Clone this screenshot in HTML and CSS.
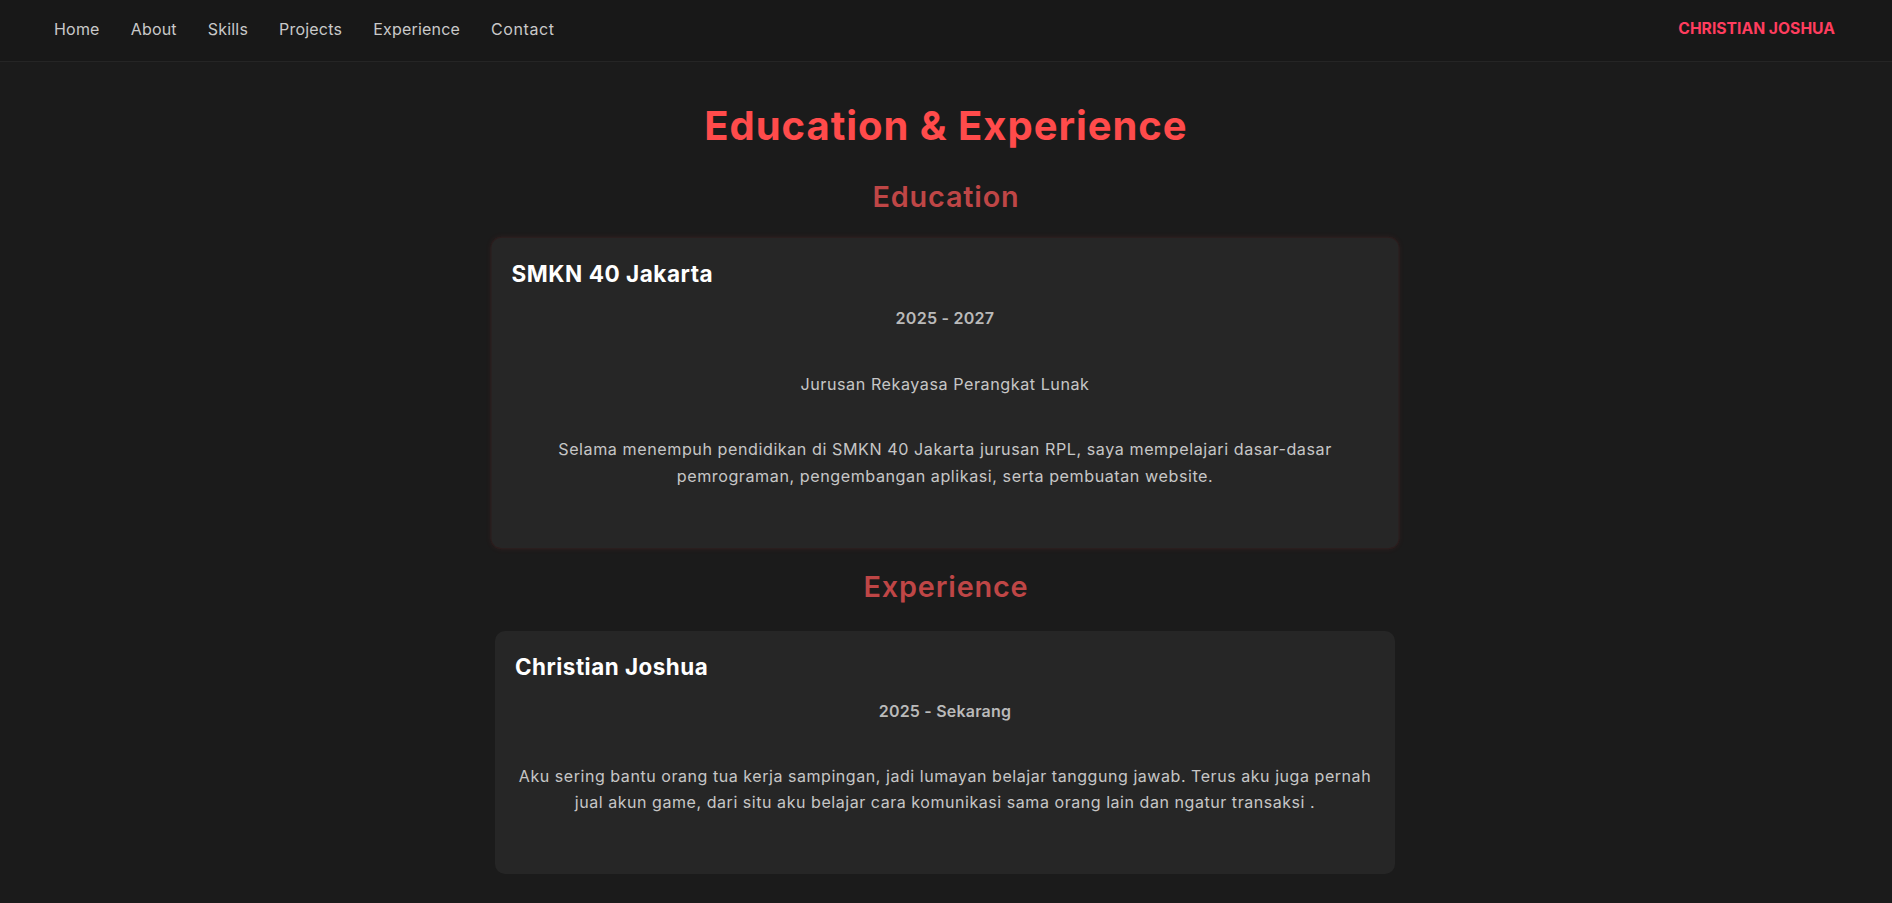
FILE: index.html
```html
<!DOCTYPE html>
<html lang="id">
<head>
<meta charset="utf-8">
<title>Christian Joshua - Experience</title>
<link rel="stylesheet" href="styles.css">
</head>
<body>
<header class="topbar">
  <nav class="nav">
    <a class="nav-link" href="#home">Home</a>
    <a class="nav-link" href="#about">About</a>
    <a class="nav-link" href="#skills">Skills</a>
    <a class="nav-link" href="#projects">Projects</a>
    <a class="nav-link" href="#experience">Experience</a>
    <a class="nav-link nav-link-last" href="#contact">Contact</a>
  </nav>
  <div class="brand">CHRISTIAN JOSHUA</div>
</header>

<main class="section" id="experience">
  <h1 class="section-title">Education &amp; Experience</h1>

  <h3 class="group-title">Education</h3>
  <div class="card card-active">
    <h4 class="card-title">SMKN 40 Jakarta</h4>
    <p class="card-date">2025 - 2027</p>
    <p class="card-text">Jurusan Rekayasa Perangkat Lunak</p>
    <p class="card-text">Selama menempuh pendidikan di SMKN 40 Jakarta jurusan RPL, saya mempelajari dasar-dasar pemrograman, pengembangan aplikasi, serta pembuatan website.</p>
  </div>

  <h3 class="group-title">Experience</h3>
  <div class="card">
    <h4 class="card-title">Christian Joshua</h4>
    <p class="card-date">2025 - Sekarang</p>
    <p class="card-text">Aku sering bantu orang tua kerja sampingan, jadi lumayan belajar tanggung jawab. Terus aku juga pernah jual akun game, dari situ aku belajar cara komunikasi sama orang lain dan ngatur transaksi .</p>
  </div>
</main>
</body>
</html>
```
FILE: styles.css
```css
* { box-sizing: border-box; }

html, body {
  margin: 0;
  padding: 0;
}

body {
  background: #1b1b1b;
  color: #c4c4c4;
  font-family: "Inter", "Noto Sans", sans-serif;
  font-size: 16px;
}

.topbar {
  display: flex;
  justify-content: space-between;
  align-items: flex-start;
  height: 62px;
  padding: 17px 57px 0 54px;
  background: #181818;
  border-bottom: 1px solid #252525;
}

.nav {
  display: flex;
  gap: 31px;
}

.nav-link {
  color: #c9c9c9;
  text-decoration: none;
  font-size: 16px;
  font-weight: 400;
  line-height: 24px;
  letter-spacing: 0.2px;
}

.nav-link-last {
  letter-spacing: 0.6px;
}

.brand {
  color: #ff3d5e;
  font-size: 15.7px;
  font-weight: 700;
  line-height: 24px;
}

.section {
  display: flex;
  flex-direction: column;
  align-items: center;
  padding: 39.5px 0 40px;
}

.section-title {
  margin: 0;
  color: #ff4b4b;
  font-size: 40px;
  font-weight: 700;
  line-height: 48px;
  letter-spacing: 0.95px;
}

.group-title {
  margin: 29px 0 24px;
  color: #bf4646;
  font-size: 28.8px;
  font-weight: 600;
  line-height: 36px;
  letter-spacing: 0.85px;
}

.card + .group-title {
  margin-top: 23px;
  margin-bottom: 25.5px;
}

.card {
  width: 900px;
  margin-right: 2px;
  padding: 23px 20px 58.4px;
  background: #262626;
  border-radius: 10px;
}

.card-active {
  transform: scale(1.008);
  box-shadow: 0 0 6px rgba(255, 60, 60, 0.08), 0 0 0 1px rgba(110, 40, 40, 0.12);
}

.card-title {
  margin: 0;
  color: #ffffff;
  font-size: 22.4px;
  font-weight: 700;
  line-height: 26.88px;
  letter-spacing: 0.5px;
}

.card-date {
  margin: 18.5px 0 0;
  text-align: center;
  color: #bababa;
  font-size: 16px;
  font-weight: 600;
  line-height: 25.6px;
  letter-spacing: 0.2px;
}

.card-text {
  margin: 39.4px 0 0;
  text-align: center;
  color: #c6c6c6;
  font-size: 16px;
  font-weight: 400;
  line-height: 25.6px;
  letter-spacing: 0.55px;
}
```
